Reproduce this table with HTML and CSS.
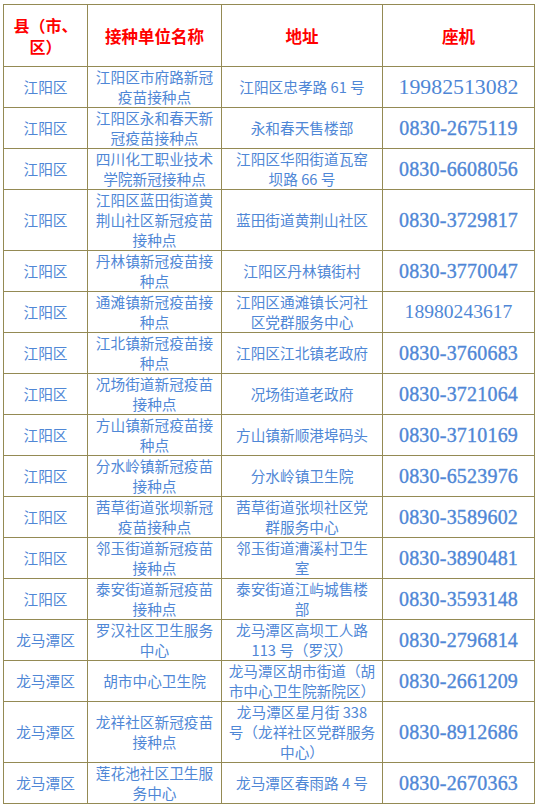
FILE: index.html
```html
<!DOCTYPE html>
<html lang="zh-CN">
<head>
<meta charset="utf-8">
<title>新冠疫苗接种点</title>
<link rel="stylesheet" href="styles.css">
</head>
<body>
<table class="sites">
  <colgroup>
    <col class="c1"><col class="c2"><col class="c3"><col class="c4">
  </colgroup>
  <thead>
    <tr>
      <th class="h-left"><span class="hl">县（市、</span><span class="hl">区）</span></th>
      <th>接种单位名称</th>
      <th>地址</th>
      <th>座机</th>
    </tr>
  </thead>
  <tbody>
    <tr><td>江阳区</td><td>江阳区市府路新冠<br>疫苗接种点</td><td>江阳区忠孝路 61 号</td><td class="tel tel-big">19982513082</td></tr>
    <tr><td>江阳区</td><td>江阳区永和春天新<br>冠疫苗接种点</td><td>永和春天售楼部</td><td class="tel">0830-2675119</td></tr>
    <tr><td>江阳区</td><td>四川化工职业技术<br>学院新冠接种点</td><td>江阳区华阳街道瓦窑<br>坝路 66 号</td><td class="tel">0830-6608056</td></tr>
    <tr><td>江阳区</td><td>江阳区蓝田街道黄<br>荆山社区新冠疫苗<br>接种点</td><td>蓝田街道黄荆山社区</td><td class="tel">0830-3729817</td></tr>
    <tr><td>江阳区</td><td>丹林镇新冠疫苗接<br>种点</td><td>江阳区丹林镇街村</td><td class="tel">0830-3770047</td></tr>
    <tr><td>江阳区</td><td>通滩镇新冠疫苗接<br>种点</td><td>江阳区通滩镇长河社<br>区党群服务中心</td><td class="tel tel-plain">18980243617</td></tr>
    <tr><td>江阳区</td><td>江北镇新冠疫苗接<br>种点</td><td>江阳区江北镇老政府</td><td class="tel">0830-3760683</td></tr>
    <tr><td>江阳区</td><td>况场街道新冠疫苗<br>接种点</td><td>况场街道老政府</td><td class="tel">0830-3721064</td></tr>
    <tr><td>江阳区</td><td>方山镇新冠疫苗接<br>种点</td><td>方山镇新顺港埠码头</td><td class="tel">0830-3710169</td></tr>
    <tr><td>江阳区</td><td>分水岭镇新冠疫苗<br>接种点</td><td>分水岭镇卫生院</td><td class="tel">0830-6523976</td></tr>
    <tr><td>江阳区</td><td>茜草街道张坝新冠<br>疫苗接种点</td><td>茜草街道张坝社区党<br>群服务中心</td><td class="tel">0830-3589602</td></tr>
    <tr><td>江阳区</td><td>邻玉街道新冠疫苗<br>接种点</td><td>邻玉街道漕溪村卫生<br>室</td><td class="tel">0830-3890481</td></tr>
    <tr><td>江阳区</td><td>泰安街道新冠疫苗<br>接种点</td><td>泰安街道江屿城售楼<br>部</td><td class="tel">0830-3593148</td></tr>
    <tr><td>龙马潭区</td><td>罗汉社区卫生服务<br>中心</td><td>龙马潭区高坝工人路<br>113 号（罗汉）</td><td class="tel">0830-2796814</td></tr>
    <tr><td>龙马潭区</td><td>胡市中心卫生院</td><td>龙马潭区胡市街道（胡<br>市中心卫生院新院区）</td><td class="tel">0830-2661209</td></tr>
    <tr><td>龙马潭区</td><td>龙祥社区新冠疫苗<br>接种点</td><td>龙马潭区星月街 338<br>号（龙祥社区党群服务<br>中心）</td><td class="tel">0830-8912686</td></tr>
    <tr><td>龙马潭区</td><td>莲花池社区卫生服<br>务中心</td><td>龙马潭区春雨路 4 号</td><td class="tel">0830-2670363</td></tr>
  </tbody>
</table>
</body>
</html>
```

FILE: styles.css
```css
html, body {
  margin: 0;
  padding: 0;
  background: #ffffff;
}

.sites {
  margin: 4px 0 0 3px;
  width: 531px;
  table-layout: fixed;
  border-collapse: collapse;
  font-family: "Noto Sans CJK SC", "Liberation Sans", sans-serif;
  font-size: 14.67px;
  line-height: 20px;
  color: #4f87d6;
}

.sites .c1 { width: 84px; }
.sites .c2 { width: 134px; }
.sites .c3 { width: 161px; }
.sites .c4 { width: 152px; }

.sites th,
.sites td {
  border: 1px solid #948a54;
  text-align: center;
  vertical-align: middle;
  white-space: nowrap;
}

.sites th {
  height: 62px;
  padding: 0 2px;
  box-sizing: border-box;
  color: #ff0000;
  font-weight: bold;
  font-size: 16.5px;
  line-height: 20px;
}

.sites .hl {
  display: block;
  line-height: 21px;
  font-size: 16px;
}

.sites td {
  padding: 0 2px;
}

.sites .tel {
  font-family: "Liberation Serif", "Times New Roman", serif;
  font-size: 20px;
  letter-spacing: 0.2px;
  -webkit-text-stroke: 0.35px currentColor;
}

.sites .tel-big {
  font-size: 21.8px;
  letter-spacing: 0;
  -webkit-text-stroke: 0;
}

.sites .tel-plain {
  font-size: 19.6px;
  letter-spacing: 0;
  -webkit-text-stroke: 0;
}
```
